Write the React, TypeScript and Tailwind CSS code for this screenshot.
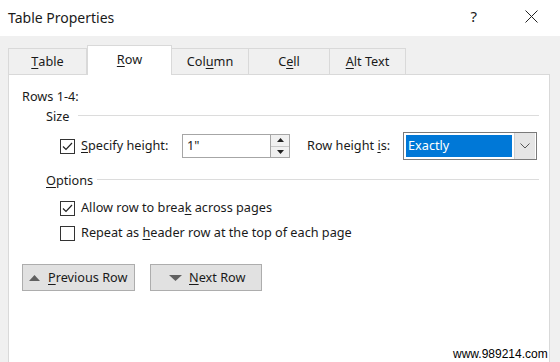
import { ReactNode } from 'react';

const font = { fontFamily: '"Noto Sans", "Open Sans", sans-serif' };

function U({ children }: { children: ReactNode }) {
  return <span className="underline underline-offset-2 decoration-1">{children}</span>;
}

function Check({ checked }: { checked?: boolean }) {
  return (
    <span className="w-[15px] h-[15px] border border-[#333] bg-white flex items-center justify-center shrink-0">
      {checked && (
        <svg width="11" height="9" viewBox="0 0 11 9">
          <path d="M1 4.5 L4 7.5 L10 1" fill="none" stroke="#222" strokeWidth="1.2" />
        </svg>
      )}
    </span>
  );
}

function GroupLabel({ children, lineStart }: { children: ReactNode; lineStart: string }) {
  return (
    <div className="flex items-center h-[20px] pl-[37px] pr-[10px]">
      <span className={lineStart}>{children}</span>
      <span className="flex-1 h-px bg-[#dcdcdc] -mt-[3px]" />
    </div>
  );
}

export default function App() {
  const tabs = [
    { id: 'table', label: <><U>T</U>able</>, w: 'w-[79px]' },
    { id: 'row', label: <><U>R</U>ow</>, w: 'w-[85px]' },
    { id: 'column', label: <>Col<U>u</U>mn</>, w: 'w-[78px]' },
    { id: 'cell', label: <>C<U>e</U>ll</>, w: 'w-[82px]' },
    { id: 'alt', label: <><U>A</U>lt Text</>, w: 'w-[77px]' },
  ];

  return (
    <div className="relative w-[560px] h-[362px] overflow-hidden bg-[#f0f0f0] text-[12.7px] text-[#1a1a1a]" style={font}>
      {/* Title bar */}
      <div className="bg-white h-[36px] flex items-center pl-[8px] pr-[22px]">
        <span className="text-[14px] flex-1 -mt-[1px]">Table Properties</span>
        <span className="text-[15px] mr-[48px] -mt-[4px]">?</span>
        <svg width="13" height="13" viewBox="0 0 13 13" className="-mt-[4px]">
          <path d="M0.5 0.5 L12.5 12.5 M12.5 0.5 L0.5 12.5" stroke="#222" strokeWidth="1" />
        </svg>
      </div>

      {/* Tabs */}
      <div className="flex items-end h-[38px] pl-[8px]">
        {tabs.map((tab) =>
          tab.id === 'row' ? (
            <div
              key={tab.id}
              className={`${tab.w} h-[30px] bg-white border border-b-0 border-[#d9d9d9] -mb-px relative z-10 flex items-center justify-center pb-[1px]`}
            >
              {tab.label}
            </div>
          ) : (
            <div
              key={tab.id}
              className={`${tab.w} h-[26px] border border-b-0 border-[#d9d9d9] -ml-px first:ml-0 flex items-center justify-center`}
            >
              {tab.label}
            </div>
          )
        )}
      </div>

      {/* Panel */}
      <div className="ml-[8px] w-[542px] h-[320px] bg-white border border-[#d9d9d9] pt-[12px]">
        <div className="h-[20px] flex items-center pl-[13px]">Rows 1-4:</div>

        <GroupLabel lineStart="mr-[9px]">Size</GroupLabel>

        <div className="mt-[5px] h-[28px] flex items-center pl-[51px]">
          <Check checked />
          <span className="ml-[6px] w-[101px]"><U>S</U>pecify height:</span>
          <div className="flex items-center h-[24px]">
            <div className="w-[89px] h-[24px] border border-[#a6a6a6] flex items-center pl-[4px]">1"</div>
            <div className="w-[20px] h-[24px] -ml-px border border-[#a6a6a6] flex flex-col">
              <div className="flex-1 bg-[#f0f0f0] border-b border-[#c8c8c8] flex items-center justify-center">
                <svg width="7" height="4" viewBox="0 0 7 4"><path d="M0 4 L3.5 0 L7 4 Z" fill="#222" /></svg>
              </div>
              <div className="flex-1 bg-[#f0f0f0] flex items-center justify-center">
                <svg width="7" height="4" viewBox="0 0 7 4"><path d="M0 0 L3.5 4 L7 0 Z" fill="#222" /></svg>
              </div>
            </div>
          </div>
          <span className="ml-[17px] w-[96px]">Row height <U>i</U>s:</span>
          <div className="w-[134px] h-[28px] border border-[#7a7a7a] flex items-center p-[2px]">
            <div className="w-[106px] h-[22px] bg-[#0078d7] text-white flex items-center pl-[2px]">Exactly</div>
            <div className="flex-1 h-[26px] -mr-[1px] ml-[2px] bg-[#e5e5e5] border-l border-[#cfcfcf] flex items-center justify-center">
              <svg width="10" height="6" viewBox="0 0 10 6"><path d="M0.5 0.5 L5 5 L9.5 0.5" fill="none" stroke="#555" strokeWidth="1" /></svg>
            </div>
          </div>
        </div>

        <div className="mt-[11px]">
          <GroupLabel lineStart="mr-[4px]"><U>O</U>ptions</GroupLabel>
        </div>

        <div className="mt-[7px] h-[20px] flex items-center pl-[51px]">
          <Check checked />
          <span className="ml-[6px]">Allow row to brea<U>k</U> across pages</span>
        </div>
        <div className="mt-[5px] h-[20px] flex items-center pl-[51px]">
          <Check />
          <span className="ml-[6px]">Repeat as <U>h</U>eader row at the top of each page</span>
        </div>

        <div className="mt-[21px] flex pl-[13px] gap-[15px]">
          <button className="w-[113px] h-[27px] bg-[#e1e1e1] border border-[#adadad] flex items-center pl-[6px]">
            <svg width="11" height="6" viewBox="0 0 11 6"><path d="M0 6 L5.5 0 L11 6 Z" fill="#606060" /></svg>
            <span className="ml-[8px]"><U>P</U>revious Row</span>
          </button>
          <button className="w-[112px] h-[27px] bg-[#e1e1e1] border border-[#adadad] flex items-center pl-[18px]">
            <svg width="13" height="6" viewBox="0 0 13 6"><path d="M0 0 L6.5 6 L13 0 Z" fill="#606060" /></svg>
            <span className="ml-[7px]"><U>N</U>ext Row</span>
          </button>
        </div>
      </div>

      {/* watermark */}
      <div className="absolute left-[453px] top-[345px] text-[12px] text-black" style={{ fontFamily: '"Liberation Sans", Arial, sans-serif' }}>
        www.989214.com
      </div>
    </div>
  );
}
